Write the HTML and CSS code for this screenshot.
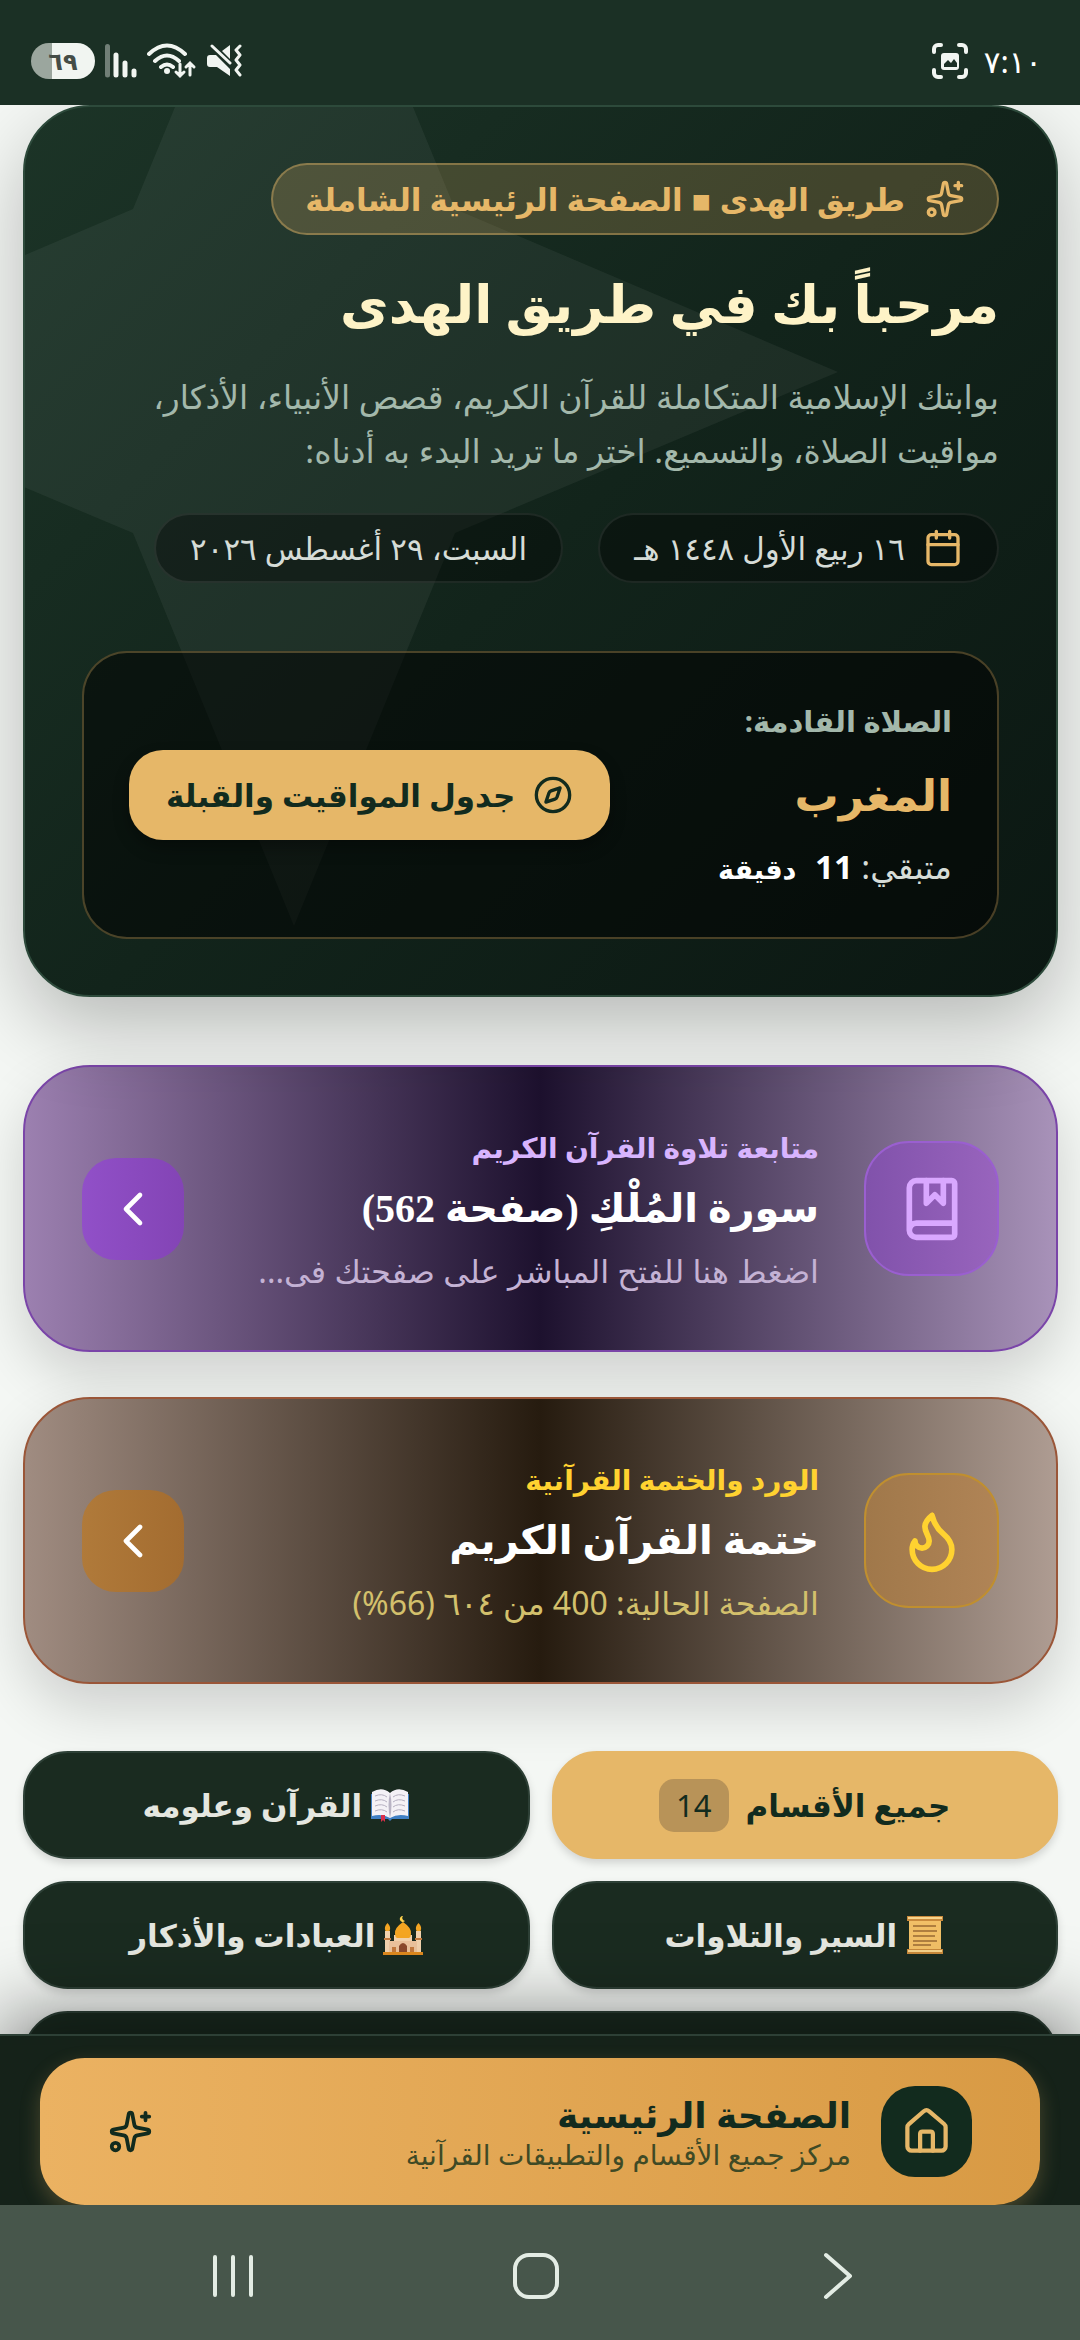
FILE: index.html
```html
<!DOCTYPE html>
<html lang="ar" dir="rtl">
<head>
    <meta charset="UTF-8">
    <meta name="viewport" content="width=device-width, initial-scale=1.0">
    <title>طريق الهدى</title>
    <link rel="stylesheet" href="styles.css">
</head>
<body>

    <!-- Status bar -->
    <header class="status-bar">
        <div class="status-group">
            <span class="status-time">٧:١٠</span>
            <svg class="status-capture" viewBox="0 0 36 36" fill="none" stroke="#f1f5f1" stroke-width="4" stroke-linecap="round">
                <path d="M2 9V6a4 4 0 0 1 4-4h3M27 2h3a4 4 0 0 1 4 4v3M34 27v3a4 4 0 0 1-4 4h-3M9 34H6a4 4 0 0 1-4-4v-3"/>
                <rect x="9" y="10" width="18" height="17" rx="3" fill="#f1f5f1" stroke="none"/>
                <path d="M12 24v-3l4-4 3 3 3-4 3 4v4z" fill="#1b3025" stroke="none"/>
            </svg>
        </div>
        <div class="status-group">
            <svg class="status-mute" viewBox="0 0 36 34" fill="#f1f5f1">
                <path d="M0 14q0-3 3-3h6l14 14v7L10 23H3q-3 0-3-3zM15 7l8-6v14z"/>
                <path d="M5 2l18 17M33 2l-4 4 4 5-4 5 4 5-4 5 4 5" fill="none" stroke="#f1f5f1" stroke-width="3" stroke-linecap="round" stroke-linejoin="round"/>
            </svg>
            <svg class="status-wifi" viewBox="0 0 50 36" fill="none" stroke="#f1f5f1" stroke-width="4" stroke-linecap="round">
                <path d="M2 11q18-17 36 0M8 18q12-11 24 0M14 24q6-5 12 0"/>
                <circle cx="20" cy="28" r="3" fill="#f1f5f1" stroke="none"/>
                <path d="M33 21v12m-4-4l4 4 4-4M43 32V20m-4 4l4-4 4 4" stroke-width="3"/>
            </svg>
            <svg class="status-signal" viewBox="0 0 32 34" stroke="#f1f5f1" stroke-width="5" stroke-linecap="round">
                <path d="M2.500 2.500V31" opacity=".4"/>
                <path d="M11 11v20M20 19v12M29 27v4"/>
            </svg>
            <span class="battery">٦٩</span>
        </div>
    </header>

    <main>
        <!-- Hero -->
        <section class="hero">
            <svg class="hero-star" viewBox="0 0 1088 1108">
                <path d="M544 0l161 391 383 163-383 161-161 393-161-393L0 554l383-163z" fill="#fff" opacity=".05"/>
            </svg>

            <div class="hero-badge">
                <svg class="icon-md" viewBox="0 0 24 24" fill="none" stroke="currentColor" stroke-width="2" stroke-linecap="round" stroke-linejoin="round">
                    <path d="M11.017 2.814a1 1 0 0 1 1.966 0l1.051 5.558a2 2 0 0 0 1.594 1.594l5.558 1.051a1 1 0 0 1 0 1.966l-5.558 1.051a2 2 0 0 0-1.594 1.594l-1.051 5.558a1 1 0 0 1-1.966 0l-1.051-5.558a2 2 0 0 0-1.594-1.594l-5.558-1.051a1 1 0 0 1 0-1.966l5.558-1.051a2 2 0 0 0 1.594-1.594z"/>
                    <path d="M20 2v4M22 4h-4"/>
                    <circle cx="4" cy="20" r="2"/>
                </svg>
                <span>طريق الهدى ▪ الصفحة الرئيسية الشاملة</span>
            </div>

            <h1>مرحباً بك في طريق الهدى</h1>
            <p class="hero-text">بوابتك الإسلامية المتكاملة للقرآن الكريم، قصص الأنبياء، الأذكار، مواقيت الصلاة، والتسميع. اختر ما تريد البدء به أدناه:</p>

            <div class="dates">
                <span class="date-pill">
                    <svg class="icon-md" viewBox="0 0 24 24" fill="none" stroke="#e6b768" stroke-width="2" stroke-linecap="round" stroke-linejoin="round">
                        <path d="M8 2v4M16 2v4M3 10h18"/>
                        <rect x="3" y="4" width="18" height="18" rx="2"/>
                    </svg>
                    ١٦ ربيع الأول ١٤٤٨ هـ
                </span>
                <span class="date-pill">السبت، ٢٩ أغسطس ٢٠٢٦</span>
            </div>

            <!-- Next prayer -->
            <div class="prayer">
                <div class="prayer-info">
                    <span class="prayer-label">الصلاة القادمة:</span>
                    <strong class="prayer-name">المغرب</strong>
                    <span class="prayer-left">متبقي: <b>11</b> <b class="prayer-unit">دقيقة</b></span>
                </div>
                <button type="button" class="prayer-btn">
                    <svg class="icon-md" viewBox="0 0 24 24" fill="none" stroke="currentColor" stroke-width="2" stroke-linecap="round" stroke-linejoin="round">
                        <circle cx="12" cy="12" r="10"/>
                        <path d="M16.24 7.76l-1.804 5.411a2 2 0 0 1-1.265 1.265L7.760 16.240l1.804-5.411a2 2 0 0 1 1.265-1.265z"/>
                    </svg>
                    جدول المواقيت والقبلة
                </button>
            </div>
        </section>

        <!-- Shortcuts -->
        <div class="cards">
            <a href="#quran" class="card card-purple">
                <span class="card-icon">
                    <svg class="icon-xl" viewBox="0 0 24 24" fill="none" stroke="currentColor" stroke-width="2" stroke-linecap="round" stroke-linejoin="round">
                        <path d="M10 2v8l3-3 3 3V2"/>
                        <path d="M4 19.500v-15A2.500 2.500 0 0 1 6.500 2H19a1 1 0 0 1 1 1v18a1 1 0 0 1-1 1H6.500a1 1 0 0 1 0-5H20"/>
                    </svg>
                </span>
                <span class="card-body">
                    <span class="card-label">متابعة تلاوة القرآن الكريم</span>
                    <strong class="card-title">سورة المُلْكِ (صفحة 562)</strong>
                    <span class="card-sub">اضغط هنا للفتح المباشر على صفحتك فى...</span>
                </span>
                <span class="card-arrow">
                    <svg class="icon-lg" viewBox="0 0 24 24" fill="none" stroke="currentColor" stroke-width="2" stroke-linecap="round" stroke-linejoin="round"><path d="M15 18l-6-6 6-6"/></svg>
                </span>
            </a>

            <a href="#khatma" class="card card-amber">
                <span class="card-icon">
                    <svg class="icon-xl" viewBox="0 0 24 24" fill="none" stroke="currentColor" stroke-width="2" stroke-linecap="round" stroke-linejoin="round">
                        <path d="M12 3q1 4 4 6.500t3 5.500a1 1 0 0 1-14 0 5 5 0 0 1 1-3 1 1 0 0 0 5 0c0-2-1.500-3-1.500-5q0-2 2.500-4"/>
                    </svg>
                </span>
                <span class="card-body">
                    <span class="card-label">الورد والختمة القرآنية</span>
                    <strong class="card-title">ختمة القرآن الكريم</strong>
                    <span class="card-sub">الصفحة الحالية: 400 من ٦٠٤ (66%)</span>
                </span>
                <span class="card-arrow">
                    <svg class="icon-lg" viewBox="0 0 24 24" fill="none" stroke="currentColor" stroke-width="2" stroke-linecap="round" stroke-linejoin="round"><path d="M15 18l-6-6 6-6"/></svg>
                </span>
            </a>
        </div>

        <!-- Section filters -->
        <div class="filters">
            <button type="button" class="filter active">جميع الأقسام <span class="count">14</span></button>
            <button type="button" class="filter">
                <svg class="emoji" viewBox="0 0 40 40">
                    <path d="M1 9h38v25H22l-2 2-2-2H1z" fill="#3f7fc4"/>
                    <path d="M2 7q10-6 18 1 8-7 18-1v24q-10-3-18 2-8-5-18-2z" fill="#f4f1f6"/>
                    <path d="M20 8q-3 12 0 25 3-13 0-25" fill="#b9b3c4"/>
                    <path d="M5 11q7-3 12 1M5 16q7-3 12 1M5 21q7-3 12 1M5 26q7-3 12 1M35 11q-7-3-12 1M35 16q-7-3-12 1M35 21q-7-3-12 1M35 26q-7-3-12 1" fill="none" stroke="#b5afc0" stroke-width="1"/>
                    <path d="M11 30h4v7l-2-2-2 2z" fill="#d92f4b"/>
                </svg>
                القرآن وعلومه
            </button>
            <button type="button" class="filter">
                <svg class="emoji" viewBox="0 0 40 40">
                    <path d="M4 4h32v32H4z" fill="#f2c067"/>
                    <path d="M2 1h36v5H2zM2 34h36v5H2z" fill="#c98a3c"/>
                    <path d="M3 2h34v2H3zM3 35h34v2H3z" fill="#f7d48c"/>
                    <path d="M8 11h23M8 16h24M8 21h22M8 26h24M8 30h18" stroke="#9a6a35" stroke-width="1.500"/>
                </svg>
                السير والتلاوات
            </button>
            <button type="button" class="filter">
                <svg class="emoji" viewBox="0 0 40 40">
                    <path d="M11 20h18v19H11zM2 16h5v23H2zM33 16h5v23h-5z" fill="#f3d3ae"/>
                    <path d="M6 26h28v13H6z" fill="#ecc39c"/>
                    <path d="M20 7q9 6 8 12 0 3-2 4H14q-2-1-2-4-1-6 8-12" fill="#f5a623"/>
                    <path d="M4.500 8q4 4 2 8h-4q-2-4 2-8M35.500 8q4 4 2 8h-4q-2-4 2-8" fill="#f5a623"/>
                    <path d="M16 39v-8q4-6 8 0v8z" fill="#8c4a2c"/>
                    <path d="M9 39v-7h4v7zM27 39v-7h4v7zM1 23h7v2H1zM32 23h7v2h-7z" fill="#c47a3e"/>
                    <path d="M20 1a3 3 0 1 0 2 5 3 3 0 0 1-2-5" fill="#ffd24d"/>
                    <path d="M0 37h40v3H0z" fill="#e08a1e"/>
                </svg>
                العبادات والأذكار
            </button>
            <button type="button" class="filter filter-wide" aria-label="المزيد"></button>
        </div>
    </main>

    <!-- Bottom bar -->
    <nav class="bottom-bar">
        <a href="#home" class="home-btn">
            <span class="home-icon">
                <svg class="icon-home" viewBox="0 0 24 24" fill="none" stroke="currentColor" stroke-width="2" stroke-linecap="round" stroke-linejoin="round">
                    <path d="M15 21v-8a1 1 0 0 0-1-1h-4a1 1 0 0 0-1 1v8"/>
                    <path d="M3 10a2 2 0 0 1 .709-1.528l7-5.999a2 2 0 0 1 2.582 0l7 5.999A2 2 0 0 1 21 10v9a2 2 0 0 1-2 2H5a2 2 0 0 1-2-2z"/>
                </svg>
            </span>
            <span class="home-body">
                <strong class="home-title">الصفحة الرئيسية</strong>
                <span class="home-sub">مركز جميع الأقسام والتطبيقات القرآنية</span>
            </span>
            <svg class="icon-spark" viewBox="0 0 24 24" fill="none" stroke="currentColor" stroke-width="2" stroke-linecap="round" stroke-linejoin="round">
                <path d="M11.017 2.814a1 1 0 0 1 1.966 0l1.051 5.558a2 2 0 0 0 1.594 1.594l5.558 1.051a1 1 0 0 1 0 1.966l-5.558 1.051a2 2 0 0 0-1.594 1.594l-1.051 5.558a1 1 0 0 1-1.966 0l-1.051-5.558a2 2 0 0 0-1.594-1.594l-5.558-1.051a1 1 0 0 1 0-1.966l5.558-1.051a2 2 0 0 0 1.594-1.594z"/>
                <path d="M20 2v4M22 4h-4"/>
                <circle cx="4" cy="20" r="2"/>
            </svg>
        </a>
    </nav>

    <!-- System navigation -->
    <footer class="system-nav">
        <button type="button" aria-label="رجوع">
            <svg class="icon-sys" viewBox="0 0 48 48" fill="none" stroke="#e3ece4" stroke-width="4" stroke-linecap="round" stroke-linejoin="round"><path d="M12 3l24 21-24 21"/></svg>
        </button>
        <button type="button" aria-label="الرئيسية">
            <svg class="icon-sys" viewBox="0 0 48 48" fill="none" stroke="#e3ece4" stroke-width="4"><rect x="3" y="3" width="42" height="42" rx="14"/></svg>
        </button>
        <button type="button" aria-label="التطبيقات الأخيرة">
            <svg class="icon-sys" viewBox="0 0 48 48" fill="none" stroke="#e3ece4" stroke-width="4" stroke-linecap="round"><path d="M6 5v38M24 5v38M42 5v38"/></svg>
        </button>
    </footer>

</body>
</html>
```
FILE: styles.css
```css
/* General Page Styling */
* {
    box-sizing: border-box;
}

body {
    margin: 0;
    height: 100vh;
    display: flex;
    flex-direction: column;
    overflow: hidden;
    background: #f4f7f4;
    font-family: "Noto Sans", "DejaVu Sans", sans-serif;
    color: #fff;
}

button {
    font: inherit;
    color: inherit;
    border: 0;
    cursor: pointer;
}

a {
    color: inherit;
    text-decoration: none;
}

svg {
    display: block;
    flex: none;
}

/* Icon sizes */
.icon-md { width: 40px; height: 40px; }
.icon-lg { width: 56px; height: 56px; }
.icon-xl { width: 68px; height: 68px; }
.icon-home { width: 51px; height: 51px; }
.icon-spark { width: 45px; height: 45px; }
.icon-sys { width: 48px; height: 48px; }
.emoji { width: 40px; height: 40px; }

/* Status bar */
.status-bar {
    display: flex;
    justify-content: space-between;
    flex: none;
    height: 105px;
    padding: 42px 38px 26px 31px;
    background: #1b3025;
    position: relative;
    z-index: 2;
}

.status-group {
    display: flex;
    align-items: center;
    gap: 10px;
}

.status-time {
    margin-left: 6px;
    font-size: 31px;
    line-height: 36px;
}

.status-capture { width: 36px; height: 36px; }
.status-mute { width: 36px; height: 34px; }
.status-wifi { width: 50px; height: 36px; }
.status-signal { width: 32px; height: 34px; }

.battery {
    width: 64px;
    height: 36px;
    border-radius: 18px;
    background: linear-gradient(90deg, #9ba69e 33%, #f1f5f1 33%);
    color: #454d47;
    font-size: 24px;
    font-weight: bold;
    line-height: 36px;
    text-align: center;
}

/* Page content */
main {
    flex: 1;
    min-height: 0;
    padding: 0 22px 0 23px;
}

.hero {
    position: relative;
    overflow: hidden;
    padding: 56px 57px;
    border: 2px solid #2d4a3b;
    border-radius: 67px;
    background: linear-gradient(135deg, #1c3427 0%, #12241b 50%, #0b1712 100%);
    box-shadow: 0 30px 80px rgba(0, 0, 0, 0.25);
}

.hero-star {
    position: absolute;
    left: -275px;
    top: -289px;
    width: 1088px;
    height: 1108px;
}

.hero-badge {
    position: relative;
    display: flex;
    align-items: center;
    gap: 20px;
    width: fit-content;
    height: 72px;
    padding: 0 32px;
    border: 2px solid rgba(230, 183, 104, 0.4);
    border-radius: 36px;
    background: rgba(230, 183, 104, 0.22);
    color: #e6b768;
    font-size: 31px;
    font-weight: bold;
}

h1 {
    position: relative;
    margin: 22px 0 17px;
    color: #fef3c7;
    font-family: "Liberation Serif", "DejaVu Sans", serif;
    font-size: 53px;
    line-height: 96px;
}

.hero-text {
    position: relative;
    margin: 0;
    color: #a3b8ab;
    font-size: 33px;
    line-height: 54px;
}

.dates {
    position: relative;
    display: flex;
    gap: 35px;
    margin-top: 35px;
}

.date-pill {
    display: flex;
    align-items: center;
    gap: 18px;
    height: 70px;
    padding: 0 34px;
    border: 2px solid rgba(255, 255, 255, 0.08);
    border-radius: 35px;
    background: rgba(0, 0, 0, 0.35);
    color: #d6dcd7;
    font-size: 31px;
}

/* Next prayer box */
.prayer {
    position: relative;
    display: flex;
    align-items: center;
    justify-content: space-between;
    height: 288px;
    margin-top: 68px;
    padding: 0 45px;
    border: 2px solid rgba(230, 183, 104, 0.3);
    border-radius: 45px;
    background: rgba(0, 0, 0, 0.5);
}

.prayer-info {
    display: flex;
    flex-direction: column;
}

.prayer-label {
    color: #a3b8ab;
    font-size: 29px;
    font-weight: bold;
    line-height: 56px;
}

.prayer-name {
    color: #e6b768;
    font-size: 44px;
    line-height: 90px;
}

.prayer-left {
    color: #d6dcd7;
    font-size: 33px;
    line-height: 56px;
}

.prayer-left b {
    color: #fff;
}

.prayer-left .prayer-unit {
    margin-right: 10px;
    font-size: 27px;
}

.prayer-btn {
    display: flex;
    align-items: center;
    gap: 18px;
    height: 90px;
    padding: 0 37px;
    border-radius: 34px;
    background: #e6b768;
    color: #122b1e;
    font-size: 31px;
    font-weight: bold;
    box-shadow: 0 8px 16px rgba(0, 0, 0, 0.3);
}

/* Shortcut cards */
.cards {
    display: flex;
    flex-direction: column;
    gap: 45px;
    margin: 68px 0 67px;
}

.card {
    display: flex;
    align-items: center;
    gap: 45px;
    height: 287px;
    padding: 0 57px;
    border: 2px solid;
    border-radius: 67px;
    box-shadow: 0 24px 56px rgba(0, 0, 0, 0.16);
}

.card-purple {
    border-color: #7a45a8;
    background: linear-gradient(90deg, #9c80b0 0%, #1d112e 50%, #a892b9 100%);
}

.card-amber {
    border-color: #9a5638;
    background: linear-gradient(90deg, #a08c81 0%, #261b0f 50%, #ae9c92 100%);
}

.card-icon,
.card-arrow {
    display: flex;
    align-items: center;
    justify-content: center;
    flex: none;
}

.card-icon {
    width: 135px;
    height: 135px;
    border: 2px solid;
    border-radius: 45px;
}

.card-arrow {
    width: 102px;
    height: 102px;
    border-radius: 34px;
}

.card-purple .card-icon {
    border-color: #9a5fd0;
    background: linear-gradient(90deg, #8152ab, #9864bd);
    color: #d9a8ff;
}

.card-amber .card-icon {
    border-color: #c08f2f;
    background: linear-gradient(90deg, #a0784a, #b08456);
    color: #ffd230;
}

.card-purple .card-arrow {
    background: linear-gradient(90deg, #9150c8, #8344b5);
}

.card-amber .card-arrow {
    background: linear-gradient(90deg, #b07a3a, #a36c30);
}

.card-body {
    display: flex;
    flex-direction: column;
    flex: 1;
    min-width: 0;
    white-space: nowrap;
}

.card-label {
    color: #d8b4fe;
    font-size: 28px;
    font-weight: bold;
    line-height: 48px;
}

.card-title {
    font-family: "Liberation Serif", "DejaVu Sans", serif;
    font-size: 40px;
    line-height: 76px;
}

.card-sub {
    color: #c4b2d4;
    font-size: 32px;
    line-height: 48px;
}

.card-amber .card-label {
    color: #ffd230;
}

.card-amber .card-sub {
    color: #d3c06c;
}

/* Section filters */
.filters {
    display: grid;
    grid-template-columns: 1fr 1fr;
    gap: 22px;
}

.filter {
    display: flex;
    align-items: center;
    justify-content: center;
    gap: 8px;
    height: 108px;
    border: 2px solid #2d4036;
    border-radius: 45px;
    background: #1a2b20;
    color: #e5e7e0;
    font-size: 31px;
    font-weight: bold;
    box-shadow: 0 4px 8px rgba(0, 0, 0, 0.15);
}

.filter.active {
    gap: 17px;
    border-color: #e6b768;
    background: #e6b768;
    color: #122b1e;
}

.filter-wide {
    grid-column: span 2;
}

.count {
    padding: 0 17px;
    border-radius: 15px;
    background: #b89358;
    font-weight: normal;
    line-height: 53px;
}

/* Bottom bar */
.bottom-bar {
    position: relative;
    z-index: 1;
    flex: none;
    height: 171px;
    padding: 22px 40px 0;
    border-top: 2px solid #2d4036;
    background: #152219;
    box-shadow: 0 -16px 80px rgba(0, 0, 0, 0.5);
}

.home-btn {
    display: flex;
    align-items: center;
    gap: 30px;
    height: 147px;
    padding: 0 68px;
    border-radius: 45px;
    background: linear-gradient(90deg, #ebb262, #d89a44);
    color: #122b1e;
    box-shadow: 0 8px 20px rgba(230, 183, 104, 0.25);
}

.home-icon {
    display: flex;
    align-items: center;
    justify-content: center;
    width: 91px;
    height: 91px;
    border-radius: 34px;
    background: #122b1e;
    color: #e6b768;
}

.home-body {
    display: flex;
    flex-direction: column;
    flex: 1;
}

.home-title {
    font-size: 36px;
    line-height: 44px;
}

.home-sub {
    color: #3f4a25;
    font-size: 28px;
    line-height: 34px;
}

/* System navigation */
.system-nav {
    position: relative;
    z-index: 2;
    display: flex;
    align-items: center;
    justify-content: space-between;
    flex: none;
    height: 135px;
    padding: 6px 218px 0 209px;
    background: #47564b;
}

.system-nav button {
    padding: 0;
    background: none;
}
```
